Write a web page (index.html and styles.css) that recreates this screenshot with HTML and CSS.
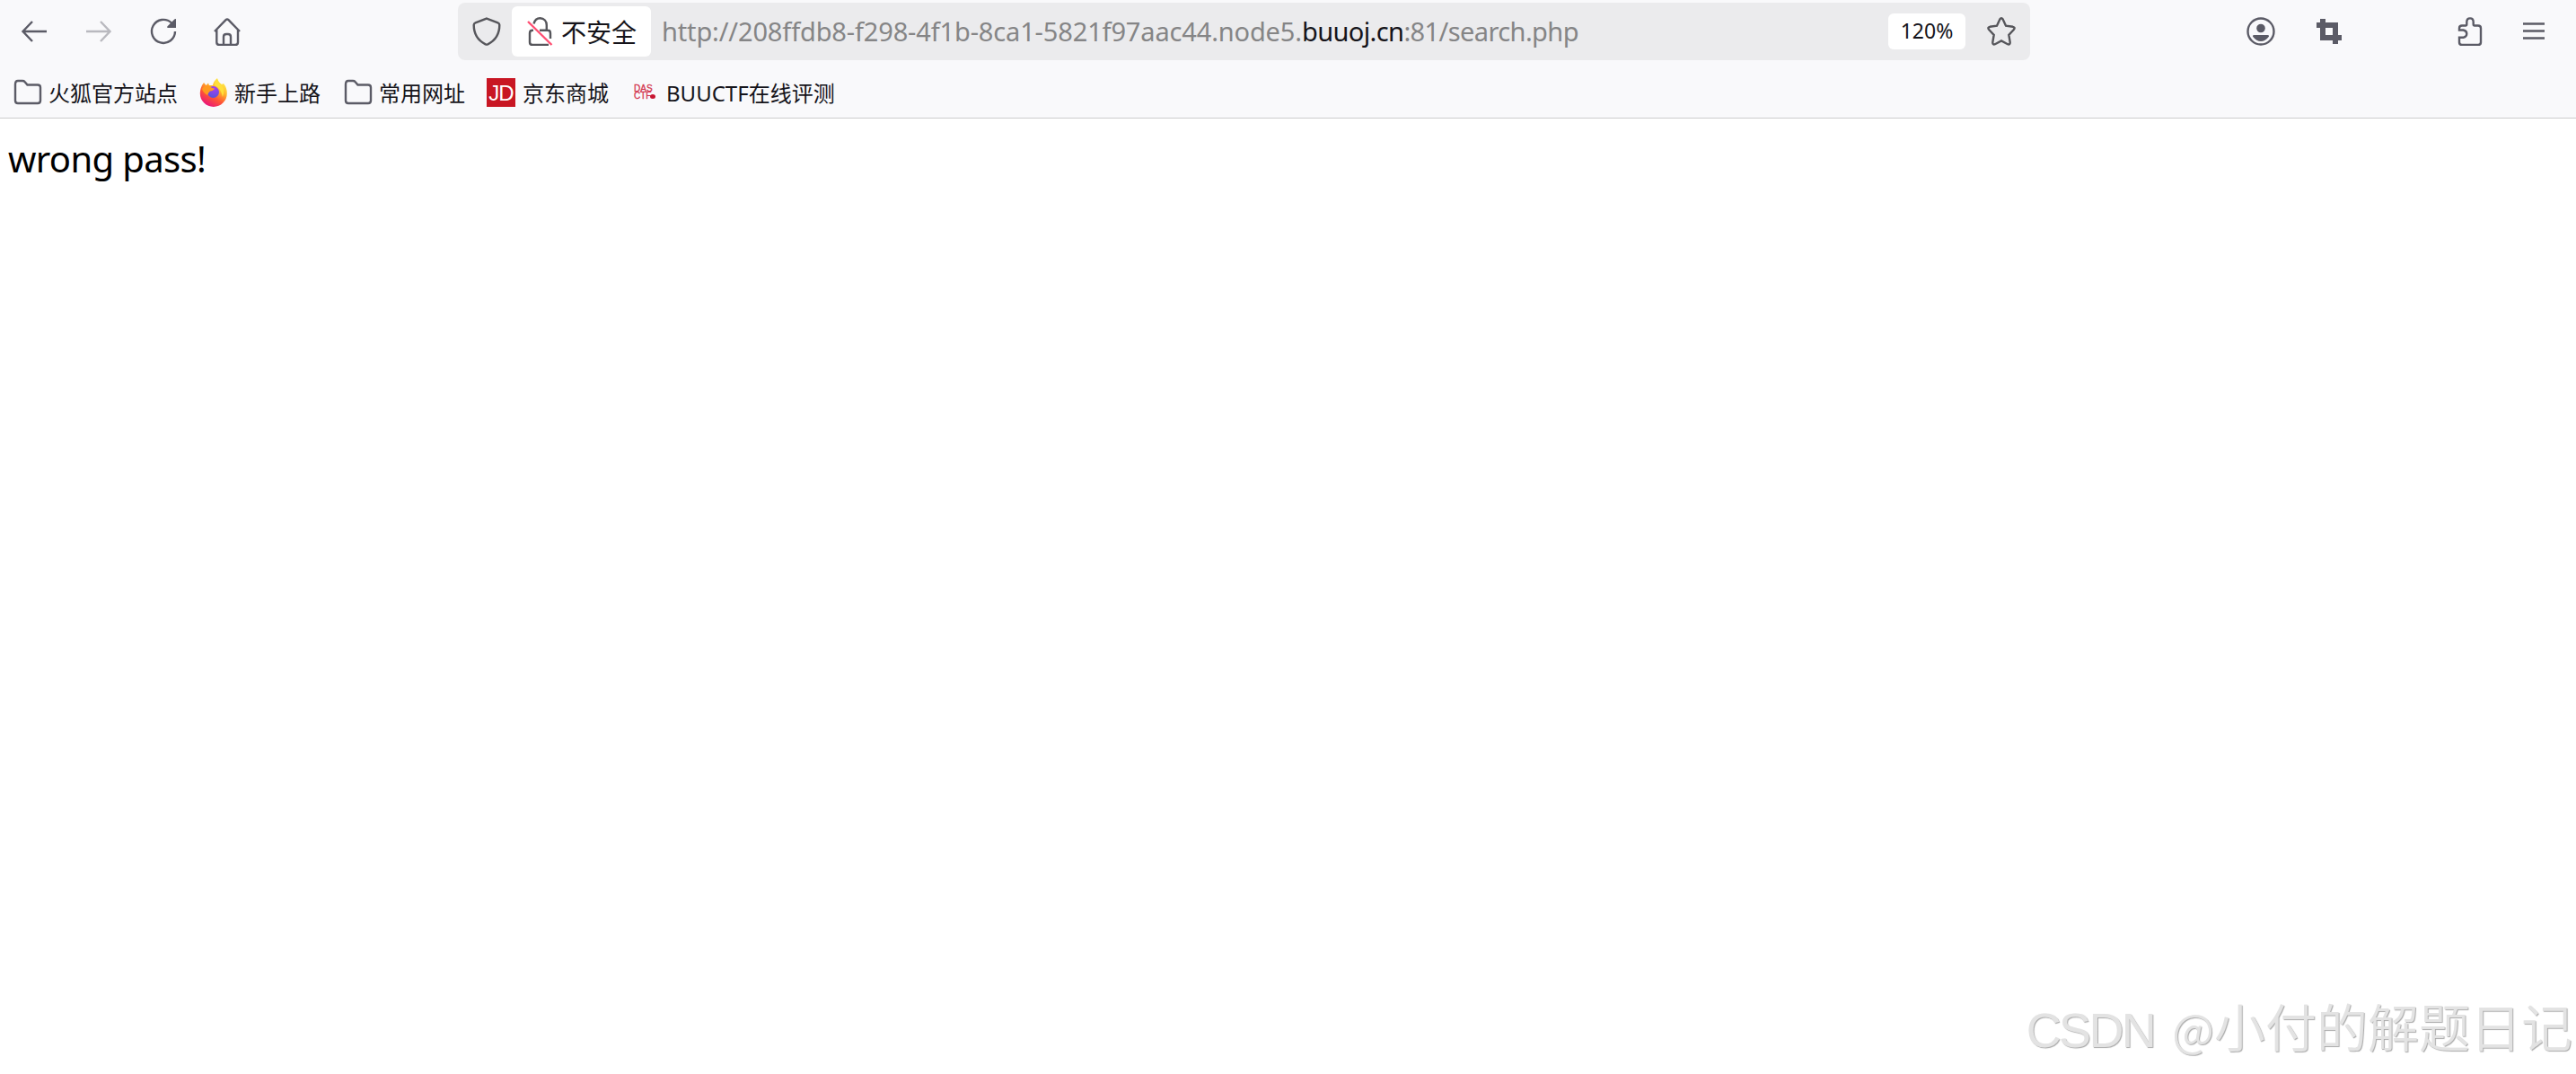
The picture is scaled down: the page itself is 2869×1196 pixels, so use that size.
FILE: index.html
```html
<!DOCTYPE html>
<html lang="zh-CN">
<head>
  <meta charset="UTF-8" />
  <title>search.php</title>
  <link rel="stylesheet" href="styles.css">
</head>
<body>
  <header class="toolbox">
    <nav class="nav-bar">
      <div class="nav-buttons">
        <button class="nav-btn" aria-label="back">
          <svg class="icon" viewBox="0 0 32 32"><path d="M30 16H4M14 5L3.500 16L14 27"/></svg>
        </button>
        <button class="nav-btn disabled" aria-label="forward">
          <svg class="icon" viewBox="0 0 32 32"><path d="M2 16H28M18 5L28.500 16L18 27"/></svg>
        </button>
        <button class="nav-btn" aria-label="reload">
          <svg class="icon" viewBox="0 0 32 32"><path d="M25 6.500A13 13 0 1 0 29 16"/><path class="solid" d="M30 2V12H20.500Q19.800 11 20.500 10.300L28.600 2.200Z"/></svg>
        </button>
        <button class="nav-btn" aria-label="home">
          <svg class="icon" viewBox="1 0 32 32"><path d="M2 16L14.500 3.200Q16 1.800 17.500 3.200L30 16M4.300 14V28Q4.300 31 7.300 31H25Q28 31 28 28V14M12 31V22Q12 19 15 19H17Q20 19 20 22V31"/></svg>
        </button>
      </div>

      <div class="url-bar">
        <svg class="icon shield" viewBox="0 0 32 32"><path d="M16 1.600L28.500 6.300Q30.300 7 30.300 8.800C30.300 19 26 26 17.300 30.300Q16 31 14.700 30.300C6 26 1.700 19 1.700 8.800Q1.700 7 3.500 6.300Z"/></svg>
        <div class="identity">
          <svg class="icon" viewBox="0 0 32 32"><path d="M9.500 7.500C10.500 3.700 13 1.300 16.500 1.300C21 1.300 23.800 4.500 23.800 9V14.500M16 14.800H25Q28 14.800 28 18V24M9 14.800H8Q5 14.800 5 18V28Q5 31 8 31H26"/><path class="strike" d="M3 5L29.500 31"/></svg>
          <span class="identity-label">不安全</span>
        </div>
        <div class="url"><span class="url-host">http://208ffdb8-f298-4f1b-8ca1-5821f97aac44.node5.</span><span class="url-domain">buuoj.cn</span><span class="url-path">:81/search.php</span></div>
        <span class="zoom">120%</span>
        <svg class="icon star" viewBox="0 0 32 32"><path d="M14.300 2.500Q16 0 17.700 2.500L21 9.700L28.800 10.800Q31.800 11.500 29.800 14L24.300 19.800L25.700 28Q25.800 31.200 23 30.200L16 26.400L9 30.200Q6.200 31.200 6.300 28L7.700 19.800L2.200 14Q.2 11.500 3.200 10.800L11 9.700Z"/></svg>
      </div>

      <div class="tools">
        <svg class="icon account" viewBox="0 0 32 32"><circle cx="16" cy="16" r="14.500"/><circle class="solid" cx="16" cy="12.500" r="4.800"/><path class="solid" d="M8.500 20H23.500Q26 20.300 24.500 22.300Q21 27 16 27Q11 27 7.500 22.300Q6 20.300 8.500 20Z"/></svg>
        <svg class="icon crop" viewBox="0 0 32 32"><path class="solid" fill-rule="evenodd" d="M6 2H12V6H26V20H30V26H26V30H20V26H6V12H2V6H6ZM12 12V20H20V12Z"/></svg>
        <svg class="icon extensions" viewBox="0 0 32 32"><path d="M4 14.500V12.500Q4 9.500 7 9.500H11Q12.300 9.500 12.300 8V5.500Q12.300 1.400 16 1.400Q19.700 1.400 19.700 5.500V8Q19.700 9.500 21 9.500H25Q28 9.500 28 12.500V28Q28 31 25 31H7Q4 31 4 28V22.800H8.500Q12.300 22 12.300 18.600Q12.300 15.300 8.500 14.500Z"/></svg>
        <svg class="icon menu" viewBox="0 0 32 32"><path d="M4 7.500H28M4 15.500H28M4 23.500H28"/></svg>
      </div>
    </nav>

    <div class="bookmarks">
      <a class="bookmark folder">
        <svg class="icon" viewBox="0 0 32 32"><path d="M2 7V25Q2 28 5 28H27Q30 28 30 25V10.500Q30 7.500 27 7.500H15.500L12.500 4Q11.700 3 10 3H5Q2 3 2 7Z"/></svg>
        <span>火狐官方站点</span>
      </a>
      <a class="bookmark firefox">
        <svg class="favicon" viewBox="0 0 32 32">
          <defs>
            <linearGradient id="flame" x1=".85" y1=".05" x2=".3" y2="1">
              <stop offset="0" stop-color="#fff44f"/>
              <stop offset=".35" stop-color="#ffb82e"/>
              <stop offset=".65" stop-color="#ff5634"/>
              <stop offset="1" stop-color="#e9117f"/>
            </linearGradient>
            <radialGradient id="globe" cx=".6" cy=".2" r=".9">
              <stop offset="0" stop-color="#a93df0"/>
              <stop offset="1" stop-color="#4f55d8"/>
            </radialGradient>
          </defs>
          <path fill="url(#flame)" d="M5 5L7.500 8L10 5.500L11 8L15 8Q16 3 20 .3Q20.500 4 25 7L27 6Q31 11 30.800 17A15 15 0 0 1 .8 17Q1 10 5 5Z"/>
          <path fill="#ffdf3c" d="M20 .3Q20.500 4 25 8Q29 13 26 21Q24 11 17 8Q17 3 20 .3Z"/>
          <circle fill="url(#globe)" cx="15.500" cy="15.500" r="6.500"/>
          <path fill="#ff9a1f" d="M3 12Q6 7 11 8.500Q13 11 17 11.500Q16 14 12 14.500Q10 16 9 19Q4 16 3 12Z"/>
        </svg>
        <span>新手上路</span>
      </a>
      <a class="bookmark folder">
        <svg class="icon" viewBox="0 0 32 32"><path d="M2 7V25Q2 28 5 28H27Q30 28 30 25V10.500Q30 7.500 27 7.500H15.500L12.500 4Q11.700 3 10 3H5Q2 3 2 7Z"/></svg>
        <span>常用网址</span>
      </a>
      <a class="bookmark jd">
        <span class="jd-logo">JD</span>
        <span>京东商城</span>
      </a>
      <a class="bookmark buuctf">
        <span class="das-logo"><span>DAS</span><span class="ctf">CTF<i class="dot"></i></span></span>
        <span><span class="latin">BUUCTF</span>在线评测</span>
      </a>
    </div>
  </header>

  <main class="page">
    <p class="message">wrong pass!</p>
    <div class="watermark"><span class="site">CSDN</span><span class="at">@</span>小付的解题日记</div>
  </main>
</body>
</html>
```
FILE: styles.css
```css
* {
  box-sizing: border-box;
}
body {
  margin: 0;
  height: 1196px;
  display: flex;
  flex-direction: column;
  background: #fff;
  color: #15141a;
  font-family: "Noto Sans", "Noto Sans CJK SC", sans-serif;
  overflow: hidden;
}

/* toolbar */
.toolbox {
  height: 132px;
  background: #f9f9fb;
  border-bottom: 1px solid #ccc;
}
.nav-bar {
  display: flex;
  height: 70px;
  padding-left: 2px;
}
.nav-buttons {
  display: flex;
  width: 508px;
}
.nav-btn {
  width: 72px;
  height: 70px;
  padding: 0;
  border: none;
  background: none;
  display: flex;
  align-items: center;
  justify-content: center;
}
.disabled {
  opacity: 0.4;
}
.icon {
  width: 32px;
  height: 32px;
  flex: none;
  fill: none;
  stroke: #5b5b66;
  stroke-width: 2.4;
}
.solid {
  fill: #5b5b66;
  stroke: none;
}

/* address bar */
.url-bar {
  display: flex;
  align-items: center;
  width: 1751px;
  height: 64px;
  margin-top: 3px;
  padding-left: 16px;
  border-radius: 8px;
  background: #ebebed;
}
.url-bar .icon {
  stroke: #56565b;
}
.identity {
  display: flex;
  align-items: center;
  width: 155px;
  height: 56px;
  margin-left: 12px;
  padding-left: 15px;
  border-radius: 6px;
  background: #fff;
}
.identity-label {
  margin-left: 8px;
  font-family: "Noto Sans CJK SC", sans-serif;
  font-size: 28px;
  line-height: 56px;
}
.icon .strike {
  stroke: #ff4f72;
}
.url {
  width: 1365px;
  padding-left: 12px;
  font-size: 29px;
  line-height: 60px;
  letter-spacing: -0.15px;
  color: #858586;
  white-space: nowrap;
}
.url-domain {
  color: #15141a;
  letter-spacing: -0.6px;
}
.url-path {
  letter-spacing: -0.6px;
}
.zoom {
  width: 86px;
  height: 40px;
  margin-left: 13px;
  border-radius: 6px;
  background: #fff;
  font-size: 23px;
  line-height: 39px;
  text-align: center;
}
.star {
  margin-left: 24px;
}
.tools {
  display: flex;
  align-items: center;
  padding-left: 241px;
}
.crop {
  margin-left: 44px;
}
.extensions {
  margin-left: 125px;
}
.menu {
  margin-left: 39px;
}

/* bookmarks */
.bookmarks {
  display: flex;
  padding-left: 15px;
}
.bookmark {
  display: flex;
  align-items: center;
  height: 65px;
  font-family: "Noto Sans CJK SC", sans-serif;
  font-size: 24px;
  line-height: 65px;
  white-space: nowrap;
}
.bookmark .icon,
.favicon {
  width: 32px;
  height: 32px;
  margin-right: 7px;
}
.firefox {
  margin-left: 24px;
}
.firefox + .folder {
  margin-left: 26px;
}
.jd {
  margin-left: 24px;
}
.jd-logo {
  width: 32px;
  height: 32px;
  margin-right: 8px;
  background: #c81623;
  color: #fff;
  font-family: "Liberation Sans", sans-serif;
  font-size: 24px;
  line-height: 34px;
  letter-spacing: -1px;
  text-align: center;
}
.buuctf {
  margin-left: 26px;
}
.das-logo {
  display: flex;
  flex-direction: column;
  width: 32px;
  margin-right: 6px;
  padding: 1px 0 0 2px;
  color: #d3344d;
  font-family: "Liberation Sans", sans-serif;
  font-size: 10px;
  line-height: 8px;
  -webkit-text-stroke: 0.3px #d3344d;
}
.ctf {
  display: flex;
  align-items: center;
}
.dot {
  width: 6px;
  height: 5px;
  margin-left: -1px;
  border-radius: 50%;
  background: #c81632;
}
.latin {
  font-family: "Noto Sans", sans-serif;
}

/* page */
.page {
  flex: 1;
  display: flex;
  flex-direction: column;
  justify-content: space-between;
}
.message {
  margin: 17px 0 0 9px;
  color: #000;
  font-size: 40px;
  line-height: 56px;
  letter-spacing: -0.65px;
}
.watermark {
  align-self: flex-end;
  padding: 0 4px 1px 0;
  color: #e3e3e3;
  font-family: "Noto Sans CJK SC", sans-serif;
  font-size: 57px;
  font-weight: 350;
  line-height: 96px;
  text-shadow: 1px 1px 1px #aaa;
  white-space: nowrap;
}
.site {
  margin-right: 20px;
  font-family: "Liberation Sans", sans-serif;
  font-size: 54px;
  letter-spacing: -2.6px;
}
.at {
  font-size: 50px;
}
```
